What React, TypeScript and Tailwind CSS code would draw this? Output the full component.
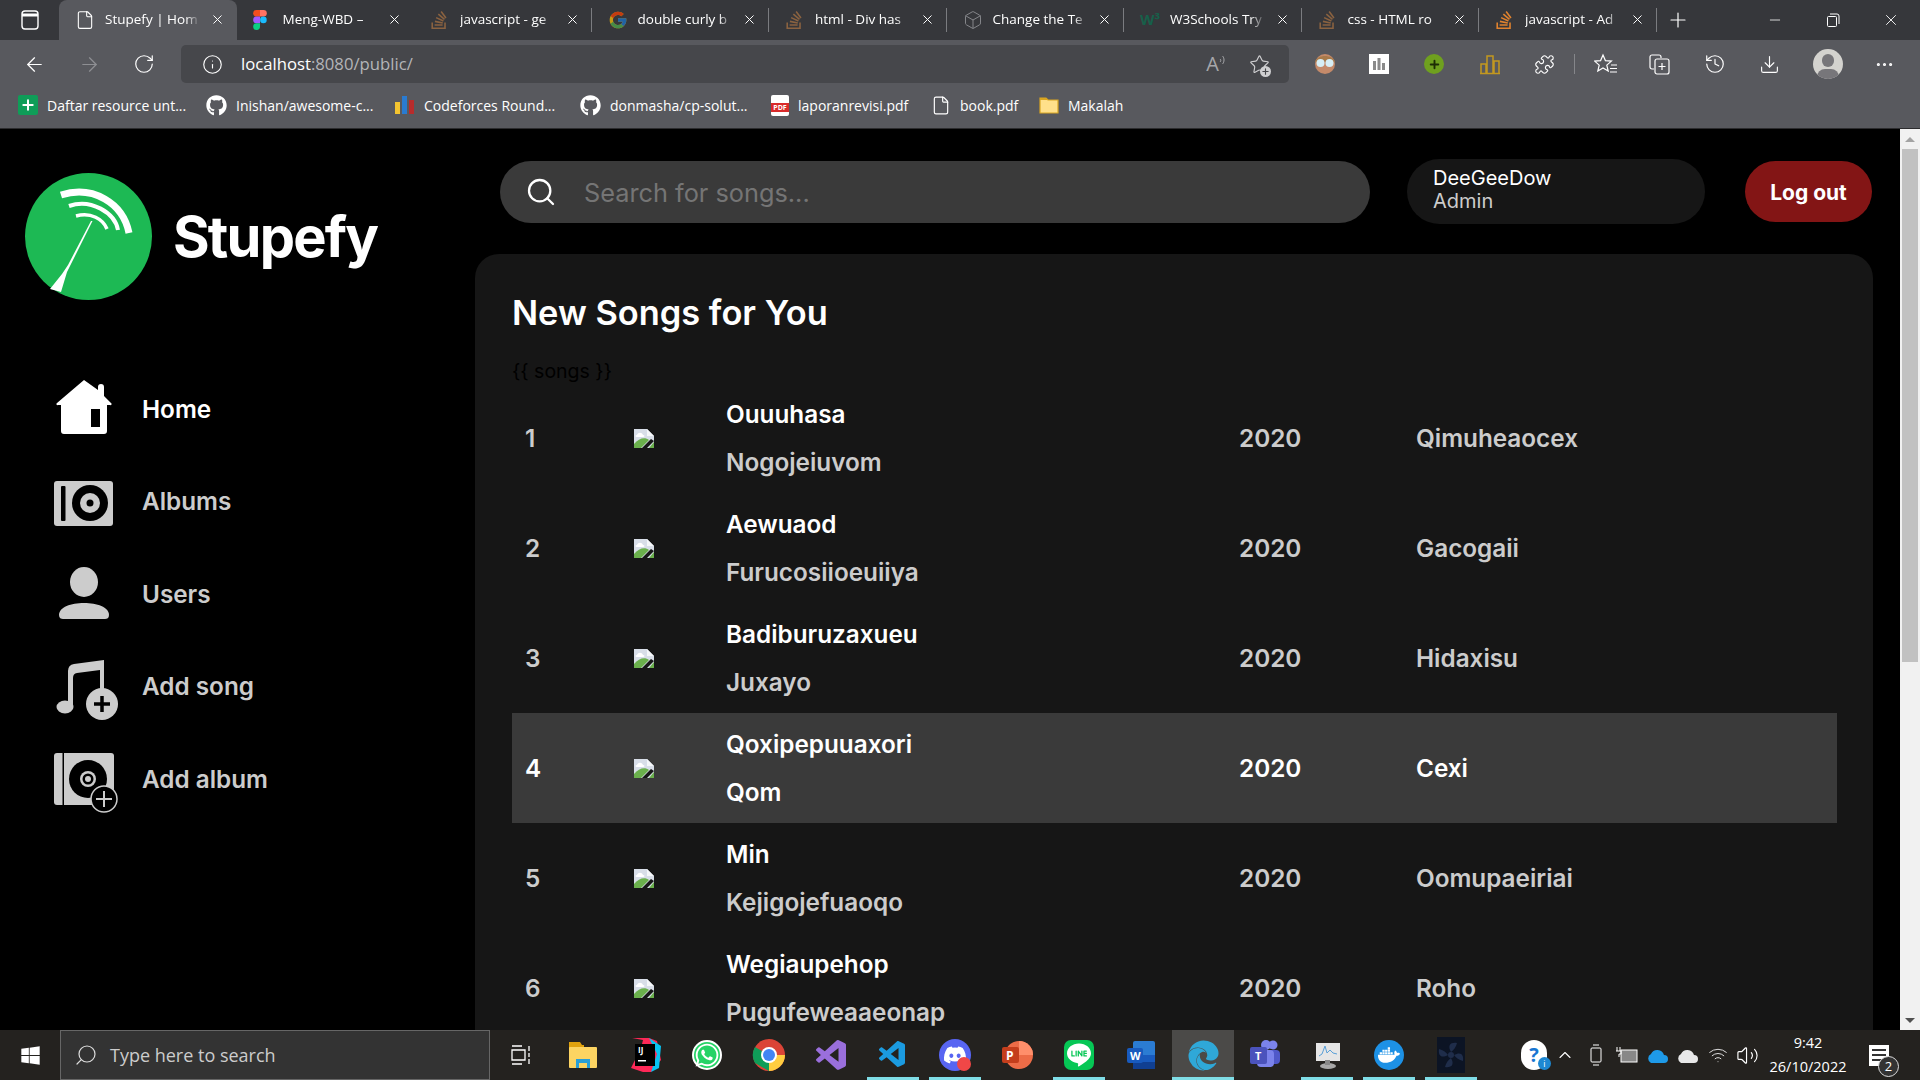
import {
  ArrowLeft,
  ArrowRight,
  Box,
  ChevronUp,
  Download,
  File,
  History,
  Info,
  Minus,
  MoreHorizontal,
  Plus,
  Puzzle,
  RotateCw,
  Search,
  Star,
  Volume2,
  Wifi,
  X,
} from "lucide-react";
import { FaGithub, FaWhatsapp, FaWindows, FaEdge, FaDiscord, FaDocker } from "react-icons/fa";
import { FcGoogle } from "react-icons/fc";
import { SiStackoverflow, SiLine } from "react-icons/si";
import { VscVscode } from "react-icons/vsc";
import { BiLogoVisualStudio } from "react-icons/bi";

const ui = "font-['Open_Sans','Noto_Sans',sans-serif]";

const Figma = () => (
  <svg width="14" height="20" viewBox="0 0 14 20">
    <path d="M7 0H3.5a3.3 3.3 0 0 0 0 6.6H7z" fill="#f24e1e" />
    <path d="M7 0h3.5a3.3 3.3 0 0 1 0 6.6H7z" fill="#ff7262" />
    <path d="M7 6.6H3.5a3.3 3.3 0 0 0 0 6.6H7z" fill="#a259ff" />
    <circle cx="10.4" cy="9.9" r="3.3" fill="#1abcfe" />
    <path d="M3.5 13.2H7v3.4a3.4 3.4 0 1 1-3.5-3.4z" fill="#0acf83" />
  </svg>
);

const W3 = () => <span className="text-[15px] font-bold leading-none text-[#17604a]">W³</span>;

const tabs = [
  { title: "Stupefy | Hom", icon: <File className="w-[20px] h-[20px] text-white" strokeWidth={1.3} />, active: true },
  { title: "Meng-WBD –", icon: <Figma /> },
  { title: "javascript - ge", icon: <SiStackoverflow className="w-[18px] h-[18px] text-[#8a6240]" /> },
  { title: "double curly b", icon: <FcGoogle className="w-[20px] h-[20px] opacity-70" /> },
  { title: "html - Div has", icon: <SiStackoverflow className="w-[18px] h-[18px] text-[#8a6240]" /> },
  { title: "Change the Te", icon: <Box className="w-[20px] h-[20px] text-[#85868a]" strokeWidth={1.2} /> },
  { title: "W3Schools Try", icon: <W3 /> },
  { title: "css - HTML ro", icon: <SiStackoverflow className="w-[18px] h-[18px] text-[#8a6240]" /> },
  { title: "javascript - Ad", icon: <SiStackoverflow className="w-[18px] h-[18px] text-[#e0822e]" /> },
];

const bookmarks = [
  {
    label: "Daftar resource unt...",
    w: "w-[188px]",
    icon: (
      <span className="w-[20px] h-[20px] rounded-[2px] bg-[#0f9d58] flex items-center justify-center">
        <Plus className="w-[16px] h-[16px] text-white" strokeWidth={3} />
      </span>
    ),
  },
  { label: "Inishan/awesome-c...", w: "w-[189px]", icon: <FaGithub className="w-[21px] h-[21px] text-white" /> },
  {
    label: "Codeforces Round...",
    w: "w-[185px]",
    icon: (
      <span className="w-[20px] h-[18px] flex items-end gap-[2px]">
        <i className="w-[5px] h-[12px] bg-[#f4c430]" />
        <i className="w-[5px] h-[18px] bg-[#2a7bd1]" />
        <i className="w-[5px] h-[14px] bg-[#b82c2c]" />
      </span>
    ),
  },
  { label: "donmasha/cp-solut...", w: "w-[191px]", icon: <FaGithub className="w-[21px] h-[21px] text-white" /> },
  {
    label: "laporanrevisi.pdf",
    w: "w-[160px]",
    icon: (
      <span className="w-[18px] h-[21px] bg-white rounded-[2px] flex items-end justify-center">
        <span className="w-full bg-[#d92b2b] text-[7px] leading-[9px] mb-[4px] text-center font-bold text-white">PDF</span>
      </span>
    ),
  },
  { label: "book.pdf", w: "w-[108px]", icon: <File className="w-[20px] h-[21px] text-white" strokeWidth={1.4} /> },
  {
    label: "Makalah",
    w: "w-[100px]",
    icon: (
      <svg width="20" height="18" viewBox="0 0 20 18">
        <path d="M1 2h6l2 2h10v13H1z" fill="#ffe08a" stroke="#d9a520" strokeWidth="1.2" />
        <path d="M1 2h6l2 2H1z" fill="#d9a520" />
      </svg>
    ),
  },
];

const songs = [
  { n: 1, title: "Ouuuhasa", sub: "Nogojeiuvom", artist: "Qimuheaocex" },
  { n: 2, title: "Aewuaod", sub: "Furucosiioeuiiya", artist: "Gacogaii" },
  { n: 3, title: "Badiburuzaxueu", sub: "Juxayo", artist: "Hidaxisu" },
  { n: 4, title: "Qoxipepuuaxori", sub: "Qom", artist: "Cexi" },
  { n: 5, title: "Min", sub: "Kejigojefuaoqo", artist: "Oomupaeiriai" },
  { n: 6, title: "Wegiaupehop", sub: "Pugufeweaaeonap", artist: "Roho" },
];

const Logo = () => (
  <svg width="127" height="127" viewBox="0 0 127 127" className="shrink-0">
    <circle cx="63.5" cy="63.5" r="63.5" fill="#1db954" />
    <g fill="none" stroke="#fff" strokeLinecap="butt">
      <path d="M36 22C68 12 98 30 104 60" strokeWidth="7" />
      <path d="M44 33C66 25 90 40 93 57" strokeWidth="4" />
      <path d="M51 43C66 39 78 46 82 56" strokeWidth="3.5" />
    </g>
    <path d="M66 48L67.500 48L45 93L42 99L36 119L25 116L37 101L43 92z" fill="#fff" />
  </svg>
);

const HomeIcon = () => (
  <svg width="66" height="80" viewBox="0 0 66 80" className="text-white">
    <path
      d="M30 12L44 22V19a3 3 0 0 1 6 0v9l7 7a1 1 0 0 1-1 2h-3v26a3 3 0 0 1-3 3H10a3 3 0 0 1-3-3V37H4a1 1 0 0 1-1-2z"
      fill="currentColor"
    />
    <rect x="37" y="41" width="9" height="18" fill="#000" />
  </svg>
);

const AlbumsIcon = () => (
  <svg width="66" height="80" viewBox="0 0 66 80">
    <rect x="0" y="20" width="59" height="45" rx="3" fill="#ccc" />
    <rect x="7" y="25" width="4.5" height="35" rx="1" fill="#000" />
    <circle cx="36" cy="42" r="18" fill="#000" />
    <circle cx="36" cy="42" r="10" fill="#ccc" />
    <circle cx="36" cy="42" r="3.5" fill="#000" />
  </svg>
);

const UsersIcon = () => (
  <svg width="66" height="80" viewBox="0 0 66 80" fill="#ccc">
    <ellipse cx="30" cy="29" rx="14" ry="15" />
    <path d="M5 62C5 54 17 50 30 50s25 4 25 12c0 3-2 4-4 4H9c-2 0-4-1-4-4z" />
  </svg>
);

const AddSongIcon = () => (
  <svg width="66" height="80" viewBox="0 0 66 80" fill="#ccc">
    <path d="M14 60V25Q14 19 20 18L50 14V50H46V24L23 27Q19 27.500 19 32V60z" />
    <ellipse cx="11" cy="61" rx="8.500" ry="6.500" />
    <circle cx="48" cy="58" r="16" />
    <path d="M48 50V66M40 58H56" stroke="#000" strokeWidth="3.500" />
  </svg>
);

const AddAlbumIcon = () => (
  <svg width="66" height="80" viewBox="0 0 66 80">
    <rect x="0" y="15" width="60" height="52" rx="3" fill="#ccc" />
    <rect x="8.500" y="15" width="1.500" height="52" fill="#000" />
    <circle cx="34" cy="41" r="19" fill="#000" />
    <circle cx="34" cy="41" r="8" fill="#ccc" />
    <circle cx="34" cy="41" r="5.500" fill="#000" />
    <circle cx="34" cy="41" r="3" fill="#ccc" />
    <circle cx="50" cy="61" r="13" fill="#000" stroke="#ccc" strokeWidth="1.500" />
    <path d="M50 53V69M42 61H58" stroke="#ccc" strokeWidth="2" />
  </svg>
);

const navItems = [
  { label: "Home", icon: <HomeIcon />, active: true },
  { label: "Albums", icon: <AlbumsIcon /> },
  { label: "Users", icon: <UsersIcon /> },
  { label: "Add song", icon: <AddSongIcon /> },
  { label: "Add album", icon: <AddAlbumIcon /> },
];

const BrokenImage = () => (
  <svg width="20" height="19" viewBox="0 0 20 19">
    <path d="M0 0H13L20 7V19H0z" fill="#d8dee8" />
    <path d="M13 0L20 7H13z" fill="#f5f7fa" />
    <path d="M3 6c1-3 5-3 6 0 2 0 2 2 0 2H3C1 8 1 6 3 6z" fill="#fff" />
    <path d="M0 19V15C5 9 11 8 15 11L7 19z" fill="#6ab04c" />
    <path d="M15 19L20 13V19z" fill="#6ab04c" />
    <path d="M8 19L17 10L20 12L13 19z" fill="#161616" />
  </svg>
);

const ChromeLogo = () => (
  <svg width="34" height="34" viewBox="0 0 34 34">
    <circle cx="17" cy="17" r="16" fill="#db4437" />
    <path d="M3 9A16 16 0 0 0 3 25L17 33L17 17z" fill="#0f9d58" />
    <path d="M17 17H33A16 16 0 0 1 17 33z" fill="#ffcd40" />
    <circle cx="17" cy="17" r="8" fill="#fff" />
    <circle cx="17" cy="17" r="6" fill="#4285f4" />
  </svg>
);

const TaskCell = ({ children, running, active }: { children: React.ReactNode; running?: boolean; active?: boolean }) => (
  <div className={`relative w-[62px] h-full flex items-center justify-center ${active ? "bg-[#4b4a48]" : ""}`}>
    {children}
    {running && <div className="absolute bottom-0 left-[5px] right-[5px] h-[3px] bg-[#7fdde6]" />}
    {active && <div className="absolute bottom-0 left-0 right-0 h-[3px] bg-[#7fdde6]" />}
  </div>
);

const Taskbar = () => (
  <div className={`${ui} h-[50px] bg-[#24221f] flex items-center text-white shrink-0`}>
    <div className="w-[60px] flex justify-center">
      <FaWindows className="w-[21px] h-[21px]" />
    </div>
    <div className="w-[430px] h-full bg-[#333333] border border-[#666] flex items-center pl-[13px] gap-[12px]">
      <Search className="w-[24px] h-[24px] -scale-x-100 text-[#ddd]" strokeWidth={1.2} />
      <span className="text-[18px] text-[#ccc]">Type here to search</span>
    </div>
    <div className="flex h-full">
      <TaskCell>
        <svg width="20" height="20" viewBox="0 0 20 20" fill="none" stroke="#fff" strokeWidth="1.300">
          <path d="M1 1h10M1 19h10M1 5h13v10H1zM18 1v5M18 8v4M18 14v5" />
        </svg>
      </TaskCell>
      <TaskCell>
        <svg width="30" height="30" viewBox="0 0 30 30">
          <path d="M1 2h11l2 3h2v6H1z" fill="#e0a20e" />
          <rect x="1" y="7" width="28" height="21" rx="1" fill="#fcd462" />
          <path d="M8 28v-9h14v9h-3v-5h-8v5z" fill="#2a9fd6" />
        </svg>
      </TaskCell>
      <TaskCell>
        <svg width="32" height="34" viewBox="0 0 32 34">
          <path d="M3 0L14 2L12 10L2 30L14 34L22 34L32 22L28 3L20 0z" fill="#fe2857" />
          <path d="M20 0L32 8L30 30L22 34L28 16z" fill="#07c3f2" />
          <rect x="6" y="6" width="20" height="22" fill="#000" />
          <text x="9" y="15" fontSize="8" fontWeight="700" fill="#fff">IJ</text>
          <rect x="9" y="22" width="8" height="1.500" fill="#fff" />
        </svg>
      </TaskCell>
      <TaskCell>
        <div className="w-[30px] h-[30px] rounded-full bg-[#25d366] border-2 border-white flex items-center justify-center">
          <FaWhatsapp className="w-[26px] h-[26px] text-white" />
        </div>
      </TaskCell>
      <TaskCell>
        <ChromeLogo />
      </TaskCell>
      <TaskCell>
        <BiLogoVisualStudio className="w-[36px] h-[36px] text-[#9a6fdc]" />
      </TaskCell>
      <TaskCell running>
        <VscVscode className="w-[32px] h-[32px] text-[#1b9be0]" />
      </TaskCell>
      <TaskCell running>
        <div className="relative w-[32px] h-[32px] rounded-full bg-[#5865f2] flex items-center justify-center">
          <FaDiscord className="w-[24px] h-[24px] text-white" />
          <span className="absolute right-0 bottom-0 w-[14px] h-[14px] rounded-full bg-[#f04747]" />
        </div>
      </TaskCell>
      <TaskCell>
        <svg width="32" height="32" viewBox="0 0 32 32">
          <circle cx="18" cy="16" r="14" fill="#ed6c47" />
          <path d="M18 2A14 14 0 0 1 32 16H18z" fill="#ff8f6b" />
          <rect x="1" y="8" width="17" height="16" rx="2" fill="#c43e1c" />
          <text x="5" y="21" fontSize="12" fontWeight="700" fill="#fff">P</text>
        </svg>
      </TaskCell>
      <TaskCell running>
        <div className="w-[30px] h-[30px] rounded-[7px] bg-[#06c755] flex items-center justify-center">
          <SiLine className="w-[24px] h-[24px] text-white" />
        </div>
      </TaskCell>
      <TaskCell>
        <svg width="32" height="32" viewBox="0 0 32 32">
          <rect x="8" y="2" width="22" height="28" rx="2" fill="#2b7cd3" />
          <rect x="8" y="16" width="22" height="7" fill="#185abd" />
          <rect x="8" y="23" width="22" height="7" fill="#103f91" />
          <rect x="2" y="9" width="16" height="15" rx="2" fill="#185abd" />
          <text x="5" y="21" fontSize="11" fontWeight="700" fill="#fff">W</text>
        </svg>
      </TaskCell>
      <TaskCell active>
        <FaEdge className="w-[31px] h-[31px] text-[#2fa8d8]" />
      </TaskCell>
      <TaskCell>
        <svg width="32" height="30" viewBox="0 0 32 30">
          <circle cx="24" cy="5" r="4.500" fill="#7b83eb" />
          <circle cx="17" cy="5" r="5" fill="#7b83eb" />
          <rect x="19" y="10" width="12" height="14" rx="4" fill="#5059c9" />
          <rect x="8" y="10" width="17" height="17" rx="4" fill="#7b83eb" />
          <rect x="1" y="7" width="17" height="17" rx="2" fill="#4b53bc" />
          <text x="6" y="20" fontSize="11" fontWeight="700" fill="#fff">T</text>
        </svg>
      </TaskCell>
      <TaskCell running>
        <svg width="30" height="30" viewBox="0 0 30 30">
          <rect x="4" y="3" width="24" height="18" fill="#e6e6e6" />
          <path d="M7 16l3-2 3-8 2 7 3-3 3 3 4 1" fill="none" stroke="#5aa0d8" strokeWidth="1" />
          <ellipse cx="16" cy="26" rx="8" ry="3" fill="#a8a8a8" />
          <rect x="13" y="20" width="5" height="5" fill="#888" />
        </svg>
      </TaskCell>
      <TaskCell running>
        <div className="w-[30px] h-[30px] rounded-full bg-[#1d91e5] flex items-center justify-center">
          <FaDocker className="w-[22px] h-[22px] text-white" />
        </div>
      </TaskCell>
      <TaskCell running>
        <svg width="28" height="36" viewBox="0 0 28 36">
          <rect width="28" height="36" fill="#0c1424" />
          <g fill="#1f2d4a">
            <circle cx="14" cy="18" r="3" />
            <path d="M14 15C10 8 14 5 20 6 19 10 17 13 14 15zM17 18C24 14 27 18 26 24 22 23 19 21 17 18zM14 21C18 28 14 31 8 30 9 26 11 23 14 21zM11 18C4 22 1 18 2 12 6 13 9 15 11 18z" />
          </g>
        </svg>
      </TaskCell>
    </div>
    <div className="flex-1 flex items-center justify-end h-full">
      <div className="relative w-[26px] h-[30px] rounded-full bg-white flex items-center justify-center mr-[8px]">
        <span className="text-[20px] leading-none font-bold text-[#1976d2]">?</span>
        <span className="absolute -right-[4px] bottom-0 w-[13px] h-[13px] rounded-full bg-[#1e88d2] text-[9px] leading-[13px] text-center">i</span>
      </div>
      <ChevronUp className="w-[20px] h-[20px] mr-[13px]" strokeWidth={1.3} />
      <svg width="16" height="24" viewBox="0 0 16 24" fill="none" stroke="#fff" className="mr-[12px]">
        <rect x="3" y="5" width="10" height="14" rx="1" />
        <path d="M5 2h6M5 22h6" />
      </svg>
      <svg width="22" height="20" viewBox="0 0 22 20" fill="#fff" className="mr-[8px]">
        <rect x="5" y="5" width="16" height="12" stroke="#fff" fill="#888" />
        <path d="M1 2v4M4 2v4M0 6h5v3H3v3" stroke="#fff" fill="none" />
      </svg>
      <svg width="22" height="16" viewBox="0 0 22 16" fill="#1e9ae8" className="mr-[8px]">
        <path d="M5 16a5 5 0 0 1 0-9 7 7 0 0 1 13 1 4 4 0 0 1 0 8z" />
      </svg>
      <svg width="22" height="16" viewBox="0 0 22 16" fill="#e8e8e8" className="mr-[10px]">
        <path d="M5 16a5 5 0 0 1 0-9 7 7 0 0 1 13 1 4 4 0 0 1 0 8z" />
      </svg>
      <Wifi className="w-[20px] h-[20px] mr-[8px] text-[#ddd]" strokeWidth={1.2} />
      <Volume2 className="w-[23px] h-[23px] mr-[6px]" strokeWidth={1.2} />
      <div className="w-[86px] text-center text-[14.5px] leading-[24px]">
        <div>9:42</div>
        <div>26/10/2022</div>
      </div>
      <div className="relative w-[69px] h-full">
        <div className="absolute left-[18px] top-[15px] w-[20px] h-[21px] bg-white flex flex-col gap-[3px] pt-[4px] px-[3px]">
          <i className="h-[2px] bg-[#333]" />
          <i className="h-[2px] bg-[#333]" />
          <i className="h-[2px] bg-[#333]" />
        </div>
        <span className="absolute left-[27px] top-[26px] w-[21px] h-[21px] rounded-full bg-[#333] border border-[#ddd] text-[13px] leading-[19px] text-center">2</span>
      </div>
    </div>
  </div>
);

const BrowserChrome = () => (
  <div className={`${ui} shrink-0 text-white`}>
    {/* tab strip */}
    <div className="h-[40px] bg-[#36373b] flex items-end">
      <div className="w-[59px] h-full flex items-center justify-center">
        <svg width="18" height="20" viewBox="0 0 18 20" fill="none" stroke="#fff" strokeWidth="1.400">
          <rect x="1" y="1" width="16" height="18" rx="3" />
          <path d="M1 5h16" strokeWidth="3" />
        </svg>
      </div>
      {tabs.map((t, i) => (
        <div
          key={t.title}
          className={`relative w-[177.5px] h-full flex items-center pl-[16px] pr-[12px] pb-[1px] ${
            t.active ? "bg-[#58595e] rounded-t-[8px]" : ""
          }`}
        >
          <span className="w-[30px] flex justify-start shrink-0">{t.icon}</span>
          <span className="w-[95px] overflow-hidden whitespace-nowrap text-[13.5px] [mask-image:linear-gradient(to_right,black_85%,transparent)]">
            {t.title}
          </span>
          <X className="w-[15px] h-[15px] ml-auto" strokeWidth={1.6} />
          {!t.active && i !== 1 && <div className="absolute right-0 top-[8px] bottom-[8px] w-px bg-[#7b7c80]" />}
        </div>
      ))}
      <div className="w-[42px] h-full flex items-center justify-center">
        <Plus className="w-[24px] h-[24px]" strokeWidth={1.2} />
      </div>
      <div className="flex-1 h-full flex items-center justify-end">
        <div className="w-[58px] flex justify-center">
          <Minus className="w-[16px] h-[16px]" strokeWidth={1.2} />
        </div>
        <div className="w-[58px] flex justify-center">
          <svg width="14" height="14" viewBox="0 0 14 14" fill="none" stroke="#fff">
            <rect x="1.500" y="3.500" width="9" height="10" rx="1" />
            <path d="M4 1h7a2 2 0 0 1 2 2v8" />
          </svg>
        </div>
        <div className="w-[58px] flex justify-center">
          <X className="w-[18px] h-[18px]" strokeWidth={1.2} />
        </div>
      </div>
    </div>
    {/* address bar */}
    <div className="h-[48px] bg-[#58595e] flex items-center">
      <div className="w-[181px] flex items-center pl-[23px] gap-[32px]">
        <ArrowLeft className="w-[23px] h-[23px]" strokeWidth={1.3} />
        <ArrowRight className="w-[23px] h-[23px] text-[#8e8f93]" strokeWidth={1.3} />
        <RotateCw className="w-[22px] h-[22px]" strokeWidth={1.3} />
      </div>
      <div className="w-[1108px] h-[38px] bg-[#46474b] rounded-[5px] flex items-center pl-[21px] pr-[19px]">
        <Info className="w-[21px] h-[21px]" strokeWidth={1.3} />
        <span className="ml-[18px] text-[16.7px]">
          localhost<span className="text-[#b4b5b8]">:8080/public/</span>
        </span>
        <span className="ml-auto flex items-start mr-[22px] text-[#a6a7aa]">
          <span className="text-[20px] leading-none">A</span>
          <svg width="8" height="12" viewBox="0 0 8 12" fill="none" stroke="currentColor">
            <path d="M1 5c1 1 1 2 0 3M3.500 2c2 2 2 6 0 8" />
          </svg>
        </span>
        <span className="relative">
          <Star className="w-[21px] h-[21px] text-[#cfcfd1]" strokeWidth={1.3} />
          <span className="absolute -right-[1px] -bottom-[2px] w-[11px] h-[11px] rounded-full bg-[#cfcfd1] flex items-center justify-center">
            <Plus className="w-[9px] h-[9px] text-[#46474b]" strokeWidth={3} />
          </span>
        </span>
      </div>
      <div className="flex-1 flex items-center pl-[25px]">
        <span className="w-[55px]">
          <svg width="22" height="24" viewBox="0 0 22 24">
            <circle cx="11" cy="12" r="10" fill="#c48a6a" />
            <path d="M1 10C3 2 19 2 21 10z" fill="#a87a4a" />
            <circle cx="6.500" cy="11" r="4" fill="#d6eef5" />
            <circle cx="15.500" cy="11" r="4" fill="#d6eef5" />
          </svg>
        </span>
        <span className="w-[55px]">
          <svg width="20" height="20" viewBox="0 0 20 20">
            <rect width="20" height="20" fill="#fff" />
            <path d="M4 7h3v9H4zM8.500 4h3v12h-3zM13 9h3v7h-3z" fill="#8a8a8a" />
          </svg>
        </span>
        <span className="w-[55px] flex">
          <span className="w-[20px] h-[20px] rounded-full bg-[#6fa01f] flex items-center justify-center">
            <Plus className="w-[13px] h-[13px] text-[#1d2d05]" strokeWidth={3.500} />
          </span>
        </span>
        <span className="w-[55px]">
          <svg width="22" height="22" viewBox="0 0 22 22" fill="none" stroke="#c2981f" strokeWidth="1.500">
            <path d="M2 20V11h5v9M8 20V3h6v17M15 20V8h5v12M1 20.500h20" />
          </svg>
        </span>
        <Puzzle className="w-[21px] h-[21px] mr-[19px]" strokeWidth={1.3} />
        <div className="w-px h-[20px] bg-[#85868a] mr-[19px]" />
        <svg width="24" height="22" viewBox="0 0 24 22" fill="none" stroke="#fff" strokeWidth="1.200" className="mr-[31px]">
          <path d="M9 2l2.400 5.600 6 .5-4.600 4 1.400 6L9 15l-5.200 3.100 1.400-6-4.600-4 6-.5zM17 12h6M16 15.500h7M16 19h7" />
        </svg>
        <svg width="21" height="22" viewBox="0 0 21 22" fill="none" stroke="#fff" strokeWidth="1.200" className="mr-[34px]">
          <path d="M5 16H3a2 2 0 0 1-2-2V4a2 2 0 0 1 2-2h7a2 2 0 0 1 2 2v1" />
          <rect x="6" y="6" width="14" height="15" rx="2" />
          <path d="M13 10v7M9.500 13.500h7" />
        </svg>
        <History className="w-[22px] h-[22px] mr-[33px]" strokeWidth={1.3} />
        <Download className="w-[21px] h-[21px] mr-[33px]" strokeWidth={1.3} />
        <div className="relative w-[30px] h-[30px] rounded-full bg-[#d4d3cf] overflow-hidden mr-[31px]">
          <span className="absolute left-[9px] top-[5px] w-[12px] h-[13px] rounded-full bg-[#77767a]" />
          <span className="absolute left-[4px] top-[20px] w-[22px] h-[16px] rounded-full bg-[#77767a]" />
        </div>
        <MoreHorizontal className="w-[21px] h-[21px]" strokeWidth={1.6} />
      </div>
    </div>
    {/* bookmarks */}
    <div className="h-[41px] bg-[#58595e] border-b border-[#2c2c2e] flex items-center pl-[18px] pb-[6px]">
      {bookmarks.map((b) => (
        <div key={b.label} className={`${b.w} flex items-center gap-[9px] shrink-0`}>
          {b.icon}
          <span className="text-[14px] whitespace-nowrap">{b.label}</span>
        </div>
      ))}
    </div>
  </div>
);

const Sidebar = () => (
  <aside className="w-[475px] shrink-0 pt-[44px] pl-[25px]">
    <div className="flex items-center gap-[21px]">
      <Logo />
      <span className="text-[56px] font-bold tracking-[-1.8px] text-white leading-none">Stupefy</span>
    </div>
    <nav className="mt-[62px] pl-[29px]">
      {navItems.map((item) => (
        <div key={item.label} className="h-[92.5px] flex items-center gap-[22px]">
          {item.icon}
          <span className={`text-[24.3px] font-semibold pt-[1px] ${item.active ? "text-white" : "text-[#ccc]"}`}>{item.label}</span>
        </div>
      ))}
    </nav>
  </aside>
);

const SongRow = ({ n, title, sub, artist }: (typeof songs)[number]) => {
  const highlighted = n === 4;
  return (
    <div
      className={`h-[110px] grid grid-cols-[122px_92px_513px_177px_1fr] items-center text-[24.3px] font-semibold ${
        highlighted ? "bg-[#3a3a3a] text-white" : "text-[#ccc]"
      }`}
    >
      <span className="pl-[13px]">{n}</span>
      <BrokenImage />
      <div className="leading-[48px]">
        <div className="text-white">{title}</div>
        <div className={highlighted ? "text-white" : "text-[#ccc]"}>{sub}</div>
      </div>
      <span>2020</span>
      <span>{artist}</span>
    </div>
  );
};

export default function App() {
  return (
    <div className="h-screen w-screen overflow-hidden flex flex-col bg-black font-['Inter',sans-serif]">
      <BrowserChrome />
      <div className="flex-1 min-h-0 flex">
        <Sidebar />
        <main className="flex-1 min-w-0">
          <div className="h-[125px] flex items-center">
            <div className="ml-[25px] w-[870px] h-[62px] rounded-full bg-[#3a3a3a] flex items-center pl-[25px]">
              <Search className="w-[32px] h-[32px] text-white" strokeWidth={1.700} />
              <span className="ml-[27px] pt-[2px] text-[25.3px] text-[#757575]">Search for songs...</span>
            </div>
            <div className="ml-[37px] w-[298px] h-[65px] rounded-full bg-[#161616] pl-[26px] pb-[3px] flex flex-col justify-center text-[20px] leading-[23px]">
              <span className="text-white">DeeGeeDow</span>
              <span className="text-[#ccc]">Admin</span>
            </div>
            <button className="ml-[40px] w-[127px] h-[61px] rounded-full bg-[#831515] text-[21px] font-bold text-white pt-[2px]">Log out</button>
          </div>
          <section className="w-[1398px] h-full bg-[#161616] rounded-t-[24px] pl-[37px] pr-[36px] pt-[37px]">
            <h1 className="text-[34.4px] leading-[44px] font-semibold text-white">New Songs for You</h1>
            <p className="mt-[24px] h-[24px] text-[19.5px] leading-[24px] text-black">{"{{ songs }}"}</p>
            {songs.map((s) => (
              <SongRow key={s.n} {...s} />
            ))}
          </section>
        </main>
        <div className="w-[20px] shrink-0 bg-[#f1f1f1] flex flex-col items-center">
          <div className="h-[20px] flex items-center justify-center">
            <div className="w-0 h-0 border-x-[5px] border-x-transparent border-b-[5px] border-b-[#a3a3a3]" />
          </div>
          <div className="w-[16px] h-[513px] bg-[#c1c1c1]" />
          <div className="mt-auto h-[20px] flex items-center justify-center">
            <div className="w-0 h-0 border-x-[5px] border-x-transparent border-t-[5px] border-t-[#505050]" />
          </div>
        </div>
      </div>
      <Taskbar />
    </div>
  );
}
